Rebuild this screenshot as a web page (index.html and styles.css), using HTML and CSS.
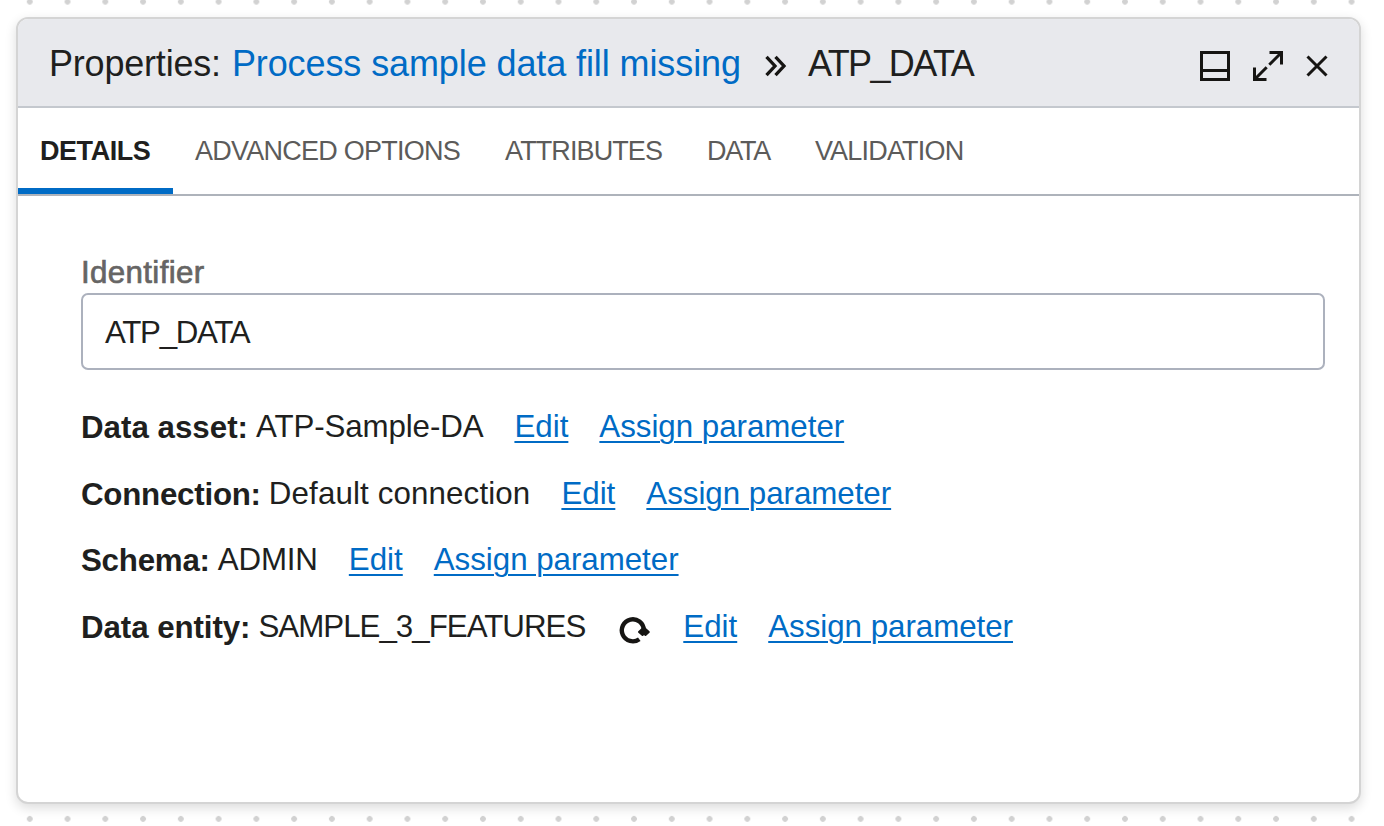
FILE: index.html
```html
<!DOCTYPE html>
<html lang="en">
<head>
<meta charset="utf-8">
<title>Properties</title>
<link rel="stylesheet" href="styles.css">
</head>
<body>
<main class="canvas">
  <section class="panel">
    <header class="panel-header">
      <h1 class="title">
        <span class="title-prefix">Properties:</span>
        <a class="title-link">Process sample data fill missing</a>
        <svg class="chevrons" width="22" height="22" viewBox="0 0 22 22"><path d="M1.500 1.800 10 11 1.500 20.200M10.500 1.800 19 11 10.500 20.200"/></svg>
        <span class="title-name">ATP_DATA</span>
      </h1>
      <div class="actions">
        <svg width="32" height="32" viewBox="0 0 32 32"><path d="M2.500 2.500H29.500V29.500H2.500ZM2.500 20.500H29.500"/></svg>
        <svg width="32" height="32" viewBox="0 0 32 32"><path d="M17.500 2.500H29.500V14.500M29 3 17.300 14.700M2.500 17.500V29.500H14.500M3 29 14.700 17.300"/></svg>
        <svg class="close" width="22" height="22" viewBox="0 0 22 22"><path d="M1.500 1.500 20.500 20.500M20.500 1.500 1.500 20.500"/></svg>
      </div>
    </header>
    <nav class="tabs">
      <a class="tab active">DETAILS</a>
      <a class="tab advanced">ADVANCED OPTIONS</a>
      <a class="tab attributes">ATTRIBUTES</a>
      <a class="tab data">DATA</a>
      <a class="tab validation">VALIDATION</a>
    </nav>
    <div class="content">
      <label class="label">Identifier</label>
      <div class="input">ATP_DATA</div>
      <div class="rows">
        <div class="row"><b class="k-asset">Data asset:</b><span class="v-asset">ATP-Sample-DA</span><a>Edit</a><a>Assign parameter</a></div>
        <div class="row"><b class="k-conn">Connection:</b><span class="v-conn">Default connection</span><a>Edit</a><a>Assign parameter</a></div>
        <div class="row"><b class="k-schema">Schema:</b><span class="v-schema">ADMIN</span><a>Edit</a><a>Assign parameter</a></div>
        <div class="row"><b class="k-entity">Data entity:</b><span class="v-entity">SAMPLE_3_FEATURES</span><svg class="refresh" width="32" height="30" viewBox="0 0 32 30"><path class="ring" d="M20.300 24.200A11 11 0 1 1 24.800 15"/><path class="head" d="M20 17 24.800 12.500 29.800 17 26.500 20 25 19 23.500 20Z"/></svg><a>Edit</a><a>Assign parameter</a></div>
      </div>
    </div>
  </section>
</main>
</body>
</html>
```
FILE: styles.css
```css
* { box-sizing: border-box; }
body { margin: 0; font-family: "Liberation Sans", Arial, sans-serif; color: #201f1e; }
.canvas {
  width: 1384px; height: 826px; padding: 17px 23px 22px 16px; overflow: hidden;
  background-color: #fff;
  background-image: radial-gradient(circle at center, #d2d2d2 2.500px, transparent 3.200px), radial-gradient(circle at center, #d2d2d2 2.500px, transparent 3.200px);
  background-size: 37.78px 37.8px;
  background-position: 10.900px -17.200px, 10.900px 800.400px;
  background-repeat: repeat-x;
}
.panel {
  width: 1345px; height: 787px; border: 2px solid #d4d4d4; border-radius: 12px;
  background: #fff; box-shadow: 0 4px 12px rgba(0, 0, 0, .14); overflow: hidden;
}
.panel-header {
  height: 89px; background: #e8e9ed; border-bottom: 2px solid #c4c8ce;
  display: flex; align-items: center; justify-content: space-between; padding: 0 31px 0 31px;
}
.title { margin: 0; padding-top: 2px; font-size: 36px; font-weight: 400; line-height: 44px; display: flex; align-items: center; white-space: nowrap; }
.title-prefix { margin-right: 11px; letter-spacing: -.2px; }
.title-link { color: #006bc5; letter-spacing: -.1px; }
.title-name { letter-spacing: -1.600px; }
.chevrons { margin: 4px 21px 0 24px; }
.chevrons, .actions svg { fill: none; stroke: #161513; stroke-width: 3; }
.chevrons { stroke-width: 3.300; }
.actions { display: flex; align-items: center; gap: 21px; padding-top: 7px; }
.actions .close { margin-left: 1px; }
.tabs { height: 88px; border-bottom: 2px solid #aeb3bb; display: flex; font-size: 27px; line-height: 86px; color: #5c5b5a; white-space: nowrap; }
.tab { margin-right: 45px; }
.advanced { letter-spacing: -.750px; }
.attributes { letter-spacing: -.900px; }
.data { letter-spacing: -1.300px; }
.validation { letter-spacing: -.800px; }
.tab.active { width: 155px; padding-left: 22px; margin-right: 22px; font-weight: 700; color: #201f1e; border-bottom: 6px solid #006bc5; letter-spacing: -.450px; }
.content { padding: 56px 34px 0 63px; font-size: 31.300px; }
.label { display: block; height: 41px; line-height: 42px; letter-spacing: .350px; color: #666564; -webkit-text-stroke: .7px #666564; }
.input { height: 77px; border: 2px solid #acb1bd; border-radius: 7px; padding-left: 22px; line-height: 75px; letter-spacing: -1.300px; }
.rows { padding-top: 24px; }
.row { height: 66.600px; display: flex; align-items: center; line-height: 40px; white-space: nowrap; }
.row b { margin-right: 8px; padding-top: 2px; }
.row a { margin-left: 31px; color: #006bc5; text-decoration: underline; text-decoration-thickness: 2px; text-underline-offset: 3.500px; }
.row a + a { letter-spacing: -.030px; }
.v-asset { letter-spacing: -.120px; }
.k-conn { letter-spacing: -.250px; }
.v-conn { letter-spacing: .130px; }
.k-schema { letter-spacing: -.250px; }
.v-schema { letter-spacing: -.150px; }
.k-entity { letter-spacing: -.080px; }
.v-entity { letter-spacing: -1px; }
.refresh { margin: 6px 1px 0 34px; }
.ring { fill: none; stroke: #161513; stroke-width: 4.400; }
.head { fill: #161513; stroke: #161513; stroke-width: 2; stroke-linejoin: round; }
```
